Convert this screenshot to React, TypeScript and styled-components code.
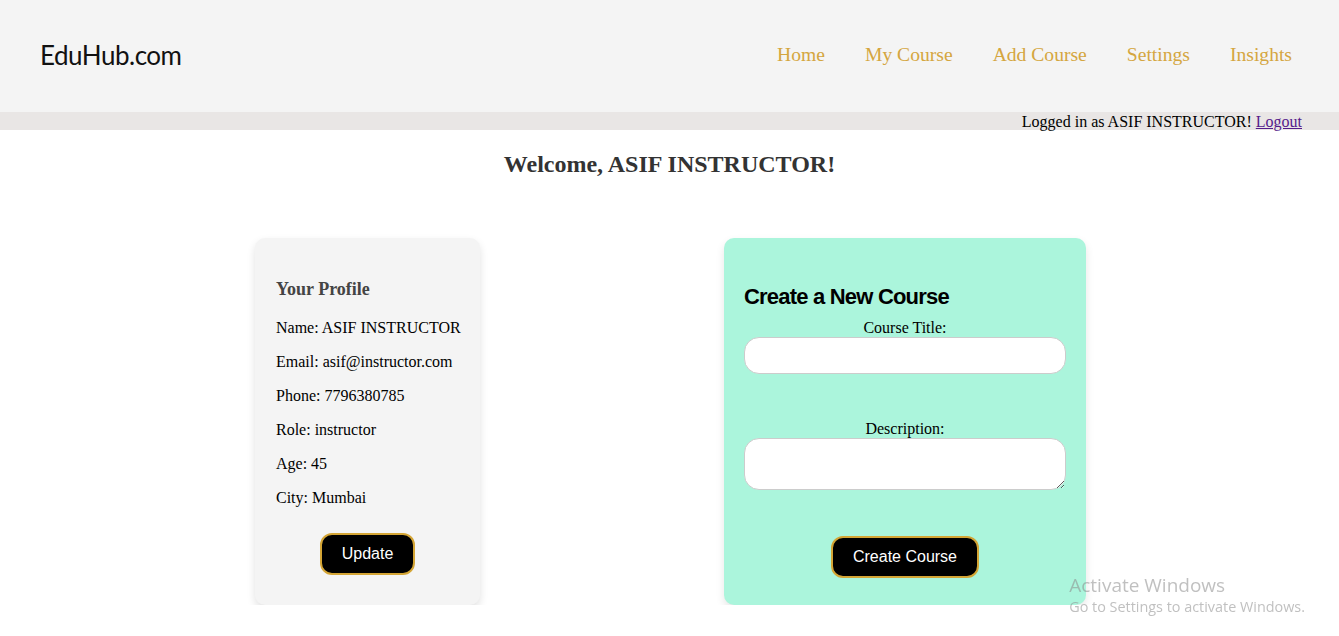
import styled, { createGlobalStyle } from "styled-components";

const GlobalStyle = createGlobalStyle`
  html, body {
    margin: 0;
    padding: 0;
    background: #ffffff;
    font-family: "Liberation Serif", "Times New Roman", serif;
  }
  * {
    box-sizing: border-box;
  }
`;

const navLinks = ["Home", "My Course", "Add Course", "Settings", "Insights"];

const profile = [
  ["Name", "ASIF INSTRUCTOR"],
  ["Email", "asif@instructor.com"],
  ["Phone", "7796380785"],
  ["Role", "instructor"],
  ["Age", "45"],
  ["City", "Mumbai"],
];

export default function App() {
  return (
    <>
      <GlobalStyle />
      <Header>
        <Logo>EduHub.com</Logo>
        <Nav>
          {navLinks.map((link) => (
            <NavLink key={link} href="#">
              {link}
            </NavLink>
          ))}
        </Nav>
      </Header>
      <StatusBar>
        Logged in as ASIF INSTRUCTOR! <LogoutLink href="#">Logout</LogoutLink>
      </StatusBar>
      <Main>
        <Welcome>Welcome, ASIF INSTRUCTOR!</Welcome>
        <Cards>
          <ProfileCard>
            <ProfileTitle>Your Profile</ProfileTitle>
            {profile.map(([label, value]) => (
              <ProfileItem key={label}>
                {label}: {value}
              </ProfileItem>
            ))}
            <ButtonRow $top={26}>
              <GoldButton>Update</GoldButton>
            </ButtonRow>
          </ProfileCard>
          <CourseCard>
            <CourseTitle>Create a New Course</CourseTitle>
            <Field>
              <FieldLabel>Course Title:</FieldLabel>
              <TextInput type="text" />
            </Field>
            <Field $top={46}>
              <FieldLabel>Description:</FieldLabel>
              <TextArea />
            </Field>
            <ButtonRow $top={46}>
              <GoldButton>Create Course</GoldButton>
            </ButtonRow>
          </CourseCard>
        </Cards>
      </Main>
      <Watermark>
        <WatermarkTitle>Activate Windows</WatermarkTitle>
        <WatermarkText>Go to Settings to activate Windows.</WatermarkText>
      </Watermark>
    </>
  );
}

const Header = styled.header`
  height: 112px;
  background: #f4f4f4;
  display: flex;
  align-items: center;
  justify-content: space-between;
  padding: 0 47px 2px 40px;
`;

const Logo = styled.div`
  font-family: Lato, "Open Sans", sans-serif;
  font-size: 26px;
  letter-spacing: -0.5px;
  color: #111;
`;

const Nav = styled.nav`
  display: flex;
  gap: 40px;
`;

const NavLink = styled.a`
  font-family: "Liberation Serif", serif;
  font-size: 19.6px;
  color: #d4a640;
  text-decoration: none;
`;

const StatusBar = styled.div`
  height: 18px;
  background: #e9e6e5;
  text-align: right;
  padding-right: 37px;
  font-size: 16px;
  line-height: 20px;
  color: #000;
`;

const LogoutLink = styled.a`
  color: #551a8b;
  text-decoration: underline;
`;

const Main = styled.main`
  display: flex;
  flex-direction: column;
  align-items: center;
`;

const Welcome = styled.h2`
  margin: 21px 0 0;
  font-size: 24px;
  line-height: 27px;
  font-weight: bold;
  color: #333;
`;

const Cards = styled.div`
  margin: 60px 0 0 2px;
  display: flex;
  justify-content: center;
  align-items: stretch;
  gap: 244px;
`;

const ProfileCard = styled.section`
  width: 225px;
  background: #f4f4f4;
  border-radius: 10px;
  box-shadow: 0 4px 8px rgba(0, 0, 0, 0.12);
  padding: 20px 21px;
`;

const ProfileTitle = styled.h3`
  margin: 21px 0 19px;
  font-size: 18px;
  line-height: 21px;
  color: #444;
`;

const ProfileItem = styled.p`
  margin: 0 0 16px;
  font-size: 16px;
  line-height: 18px;
  color: #000;
  white-space: nowrap;
  &:last-of-type {
    margin-bottom: 0;
  }
`;

const ButtonRow = styled.div<{ $top: number }>`
  margin-top: ${(p) => p.$top}px;
  display: flex;
  justify-content: center;
`;

const GoldButton = styled.button`
  font-family: "Liberation Sans", Arial, sans-serif;
  font-size: 16px;
  line-height: 18px;
  height: 42px;
  color: #fff;
  background: #000;
  border: 2px solid #d4a535;
  border-radius: 12px;
  padding: 0 20px;
  cursor: pointer;
`;

const CourseCard = styled.section`
  width: 362px;
  background: #abf5dc;
  border-radius: 10px;
  box-shadow: 0 4px 8px rgba(0, 0, 0, 0.1);
  padding: 20px 20px 27px;
`;

const CourseTitle = styled.h2`
  margin: 26px 0 10px;
  font-family: "Liberation Sans", Arial, sans-serif;
  font-size: 22px;
  line-height: 25px;
  letter-spacing: -0.8px;
  font-weight: bold;
  color: #000;
`;

const Field = styled.div<{ $top?: number }>`
  margin-top: ${(p) => p.$top ?? 0}px;
  display: flex;
  flex-direction: column;
  align-items: stretch;
`;

const FieldLabel = styled.label`
  font-size: 16px;
  line-height: 18px;
  text-align: center;
  color: #000;
`;

const TextInput = styled.input`
  height: 37px;
  border: 1px solid #cccccc;
  border-radius: 15px;
  background: #fff;
  padding: 0 12px;
  outline: none;
`;

const TextArea = styled.textarea`
  height: 52px;
  border: 1px solid #cccccc;
  border-radius: 15px;
  background: #fff;
  padding: 8px 12px;
  outline: none;
  display: block;
`;

const Watermark = styled.div`
  position: fixed;
  right: 34px;
  bottom: 19px;
  font-family: "Open Sans", sans-serif;
  color: rgba(140, 140, 140, 0.55);
  pointer-events: none;
`;

const WatermarkTitle = styled.div`
  font-size: 19px;
  line-height: 23px;
`;

const WatermarkText = styled.div`
  font-size: 14.4px;
  line-height: 20px;
`;
